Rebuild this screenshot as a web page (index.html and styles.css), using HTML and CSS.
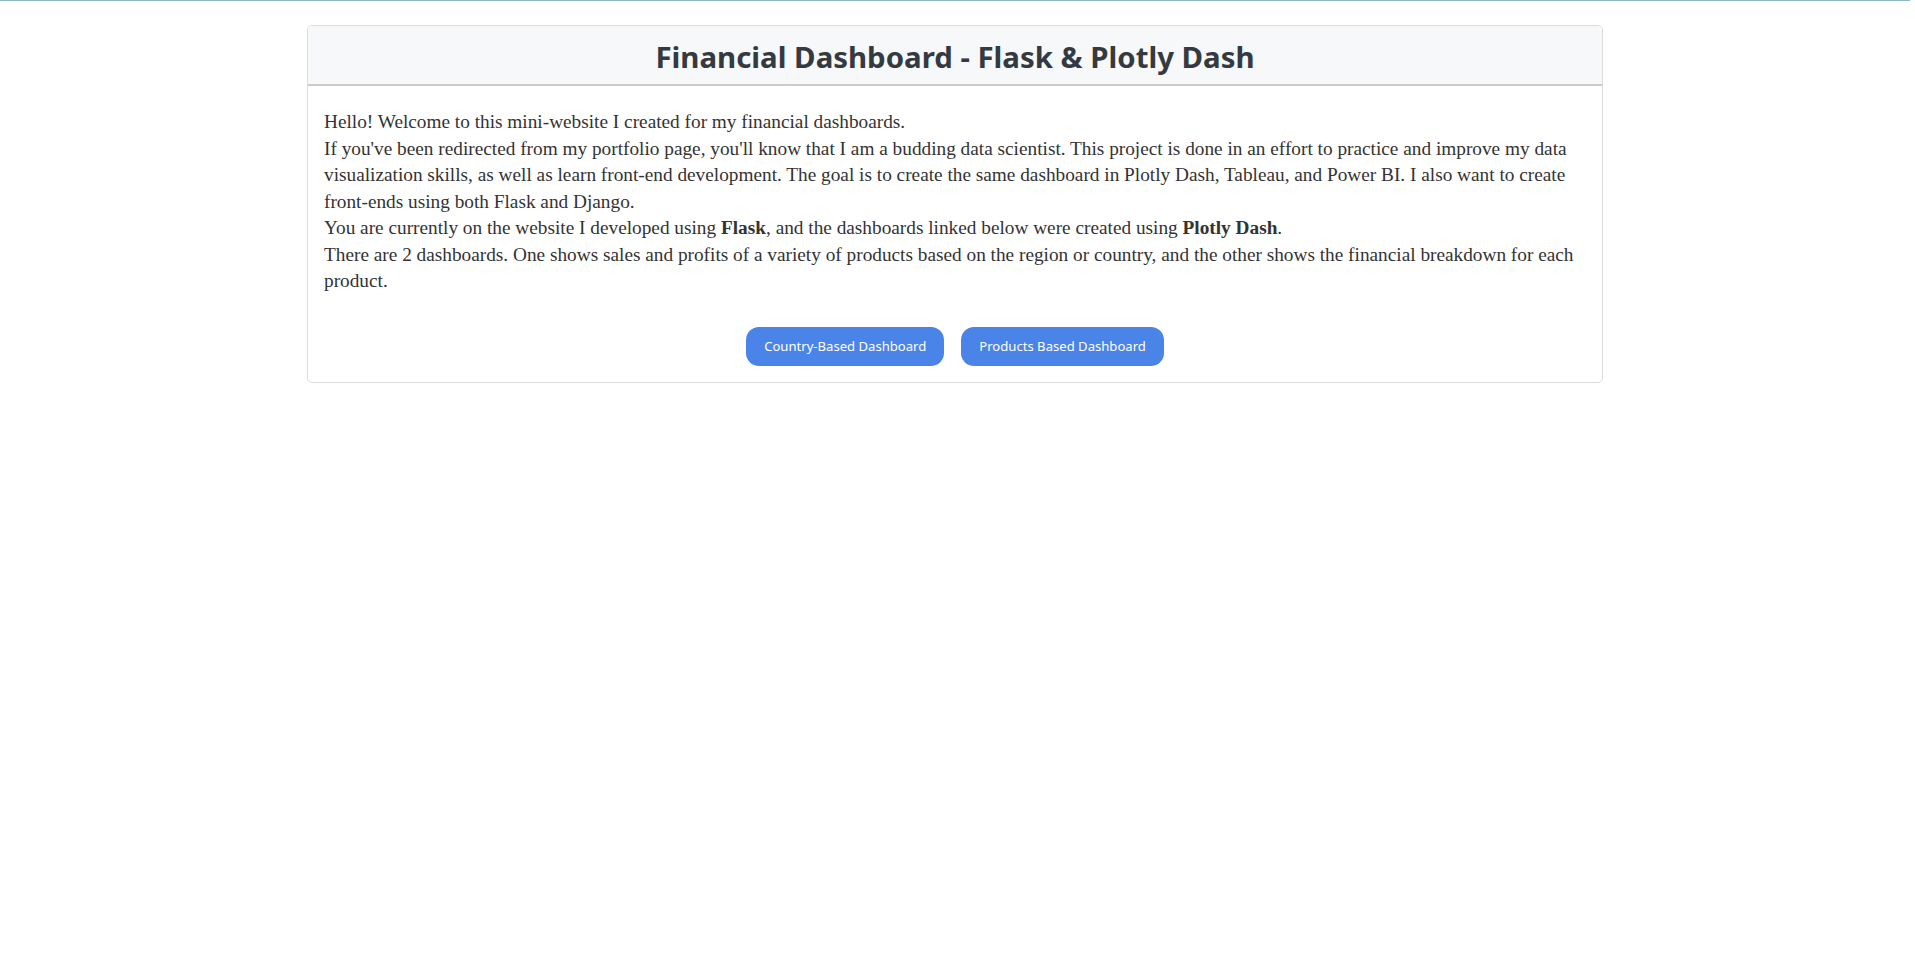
FILE: index.html
```html
<!DOCTYPE html>
<html lang="en">
<head>
<meta charset="utf-8">
<title>Financial Dashboard - Flask &amp; Plotly Dash</title>
<link rel="stylesheet" href="styles.css">
</head>
<body>
<div class="topline"></div>
<main class="container">
  <section class="card">
    <header class="card-header">
      <h2 class="title">Financial Dashboard - Flask &amp; Plotly Dash</h2>
    </header>
    <div class="card-body">
      <p class="intro">Hello! Welcome to this mini-website I created for my financial dashboards.<br>
      If you've been redirected from my portfolio page, you'll know that I am a budding data scientist. This project is done in an effort to practice and improve my data<br>
      visualization skills, as well as learn front-end development. The goal is to create the same dashboard in Plotly Dash, Tableau, and Power BI. I also want to create<br>
      front-ends using both Flask and Django.<br>
      You are currently on the website I developed using <b>Flask</b>, and the dashboards linked below were created using <b>Plotly Dash</b>.<br>
      There are 2 dashboards. One shows sales and profits of a variety of products based on the region or country, and the other shows the financial breakdown for each<br>
      product.</p>
      <div class="actions">
        <a class="btn" href="#">Country-Based Dashboard</a>
        <a class="btn" href="#">Products Based Dashboard</a>
      </div>
    </div>
  </section>
</main>
</body>
</html>
```

FILE: styles.css
```css
html, body {
  margin: 0;
  padding: 0;
  background: #ffffff;
}

body {
  padding-right: 5px;
  font-family: "Liberation Serif", serif;
  color: #333333;
}

.topline {
  height: 1px;
  background: #8cbac2;
}

.container {
  max-width: 1296px;
  margin: 24px auto 0;
}

.card {
  border: 1px solid #dcdcdc;
  border-radius: 5px;
  overflow: hidden;
  background: #fff;
}

.card-header {
  background: #f7f8f9;
  border-bottom: 2px solid #cccccc;
  padding: 10px 16px 6px;
  height: 42px;
  display: flex;
  align-items: center;
  justify-content: center;
}

.title {
  margin: 0;
  font-family: "Noto Sans", "Open Sans", sans-serif;
  font-weight: 700;
  font-size: 29.4px;
  line-height: 42px;
  color: #343a40;
  text-align: center;
}

.card-body {
  padding: 23px 16px 16px;
}

.intro {
  margin: 0;
  font-family: "Liberation Serif", serif;
  font-size: 19.3px;
  line-height: 26.5px;
  color: #333333;
}

.intro b {
  font-weight: 700;
}

.actions {
  display: flex;
  justify-content: center;
  gap: 17px;
  margin-top: 32px;
}

.btn {
  display: inline-flex;
  align-items: center;
  justify-content: center;
  height: 39px;
  padding: 0 18px;
  background: #4a84e8;
  color: #ffffff;
  border-radius: 13px;
  font-family: "Noto Sans", "Open Sans", sans-serif;
  font-size: 13.1px;
  text-decoration: none;
}
```
